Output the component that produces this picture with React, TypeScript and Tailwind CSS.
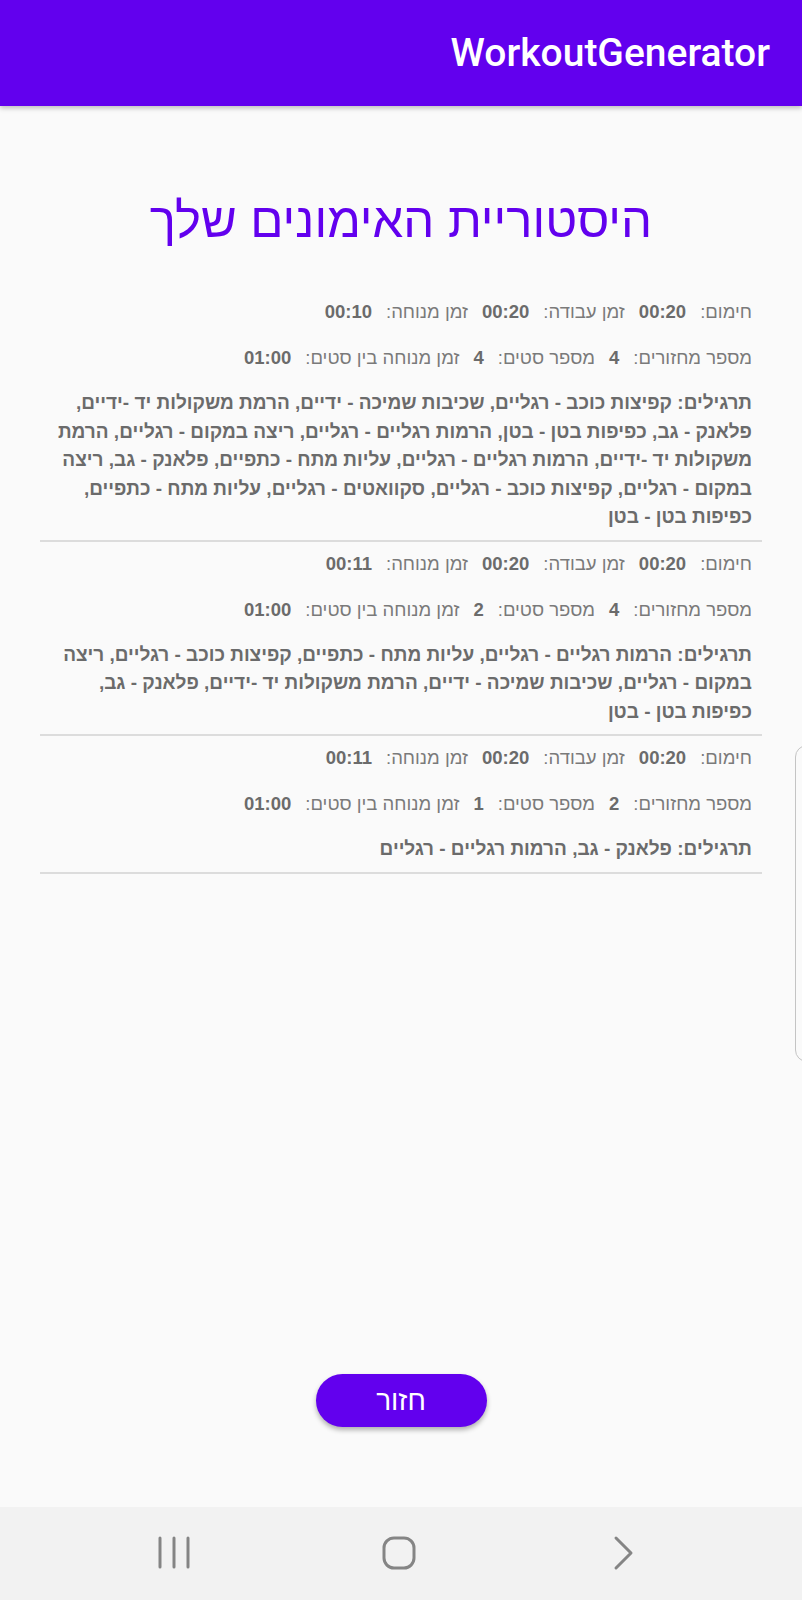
import React from "react";

type Entry = {
  warm: string;
  work: string;
  rest: string;
  rounds: string;
  sets: string;
  setRest: string;
  lines: string[];
};

const entries: Entry[] = [
  {
    warm: "00:20",
    work: "00:20",
    rest: "00:10",
    rounds: "4",
    sets: "4",
    setRest: "01:00",
    lines: [
      "תרגילים: קפיצות כוכב - רגליים, שכיבות שמיכה - ידיים, הרמת משקולות יד -ידיים,",
      "פלאנק - גב, כפיפות בטן - בטן, הרמות רגליים - רגליים, ריצה במקום - רגליים, הרמת",
      "משקולות יד -ידיים, הרמות רגליים - רגליים, עליות מתח - כתפיים, פלאנק - גב, ריצה",
      "במקום - רגליים, קפיצות כוכב - רגליים, סקוואטים - רגליים, עליות מתח - כתפיים,",
      "כפיפות בטן - בטן",
    ],
  },
  {
    warm: "00:20",
    work: "00:20",
    rest: "00:11",
    rounds: "4",
    sets: "2",
    setRest: "01:00",
    lines: [
      "תרגילים: הרמות רגליים - רגליים, עליות מתח - כתפיים, קפיצות כוכב - רגליים, ריצה",
      "במקום - רגליים, שכיבות שמיכה - ידיים, הרמת משקולות יד -ידיים, פלאנק - גב,",
      "כפיפות בטן - בטן",
    ],
  },
  {
    warm: "00:20",
    work: "00:20",
    rest: "00:11",
    rounds: "2",
    sets: "1",
    setRest: "01:00",
    lines: ["תרגילים: פלאנק - גב, הרמות רגליים - רגליים"],
  },
];

function Pair({ label, value }: { label: string; value: string }) {
  return (
    <>
      <span className="text-[#7a7a7a]">{label}</span>
      <span className="font-bold text-[#6b6b6b]">{value}</span>
    </>
  );
}

function Item({ e }: { e: Entry }) {
  return (
    <div className="border-b-2 border-[#dcdcdc] px-[10px] pt-[8px] pb-[8px]">
      <div className="flex h-[28px] items-center gap-[14px] text-[18.5px]">
        <Pair label="חימום:" value={e.warm} />
        <Pair label="זמן עבודה:" value={e.work} />
        <Pair label="זמן מנוחה:" value={e.rest} />
      </div>
      <div className="mt-[18px] flex h-[28px] items-center gap-[14px] text-[18.5px]">
        <Pair label="מספר מחזורים:" value={e.rounds} />
        <Pair label="מספר סטים:" value={e.sets} />
        <Pair label="זמן מנוחה בין סטים:" value={e.setRest} />
      </div>
      <div className="mt-[17px] text-[19px] font-bold leading-[28.5px] text-[#6b6b6b]">
        {e.lines.map((l, i) => (
          <div key={i} className="whitespace-nowrap">
            {l}
          </div>
        ))}
      </div>
    </div>
  );
}

export default function App() {
  return (
    <div
      className="relative flex h-[1600px] w-full flex-col overflow-hidden bg-[#fafafa]"
      style={{ fontFamily: '"Liberation Sans", "DejaVu Sans", sans-serif' }}
    >
      <header className="z-10 flex h-[106px] shrink-0 items-center justify-end bg-[#6200ee] pr-[32px] shadow-[0_2px_5px_rgba(0,0,0,0.25)]">
        <span
          className="text-[39px] font-medium text-white"
          style={{ fontFamily: "Roboto, sans-serif" }}
        >
          WorkoutGenerator
        </span>
      </header>

      <main dir="rtl" className="flex flex-1 flex-col">
        <h1 className="mt-[85px] text-center text-[49px] leading-[58px] text-[#6200ee]">
          היסטוריית האימונים שלך
        </h1>

        <div className="mx-[40px] mt-[41px]">
          {entries.map((e, i) => (
            <Item key={i} e={e} />
          ))}
        </div>

        <div className="mt-auto mb-[80px] flex justify-center">
          <button className="h-[53px] w-[171px] rounded-full bg-[#6200ee] text-[28px] text-white shadow-[0_3px_5px_rgba(0,0,0,0.3)]">
            חזור
          </button>
        </div>
      </main>

      <nav className="flex h-[93px] shrink-0 items-center bg-[#f2f2f2]">
        <div className="relative h-full w-full">
          <svg
            className="absolute left-[157px] top-[29px]"
            width="34"
            height="34"
            viewBox="0 0 34 34"
            fill="none"
            stroke="#858585"
            strokeWidth="3"
            strokeLinecap="round"
          >
            <line x1="3" y1="2" x2="3" y2="31" />
            <line x1="17" y1="2" x2="17" y2="31" />
            <line x1="31" y1="2" x2="31" y2="31" />
          </svg>
          <svg
            className="absolute left-[381px] top-[28px]"
            width="36"
            height="36"
            viewBox="0 0 36 36"
            fill="none"
            stroke="#858585"
            strokeWidth="3"
          >
            <rect x="3" y="3" width="30" height="30" rx="10" />
          </svg>
          <svg
            className="absolute left-[612px] top-[28px]"
            width="24"
            height="36"
            viewBox="0 0 24 36"
            fill="none"
            stroke="#858585"
            strokeWidth="3"
            strokeLinecap="round"
            strokeLinejoin="round"
          >
            <polyline points="4,3 19,18 4,33" />
          </svg>
        </div>
      </nav>

      <div className="absolute right-[-12px] top-[745px] h-[317px] w-[19px] rounded-l-[12px] border-[1.5px] border-[#c4c4c4]" />
    </div>
  );
}
